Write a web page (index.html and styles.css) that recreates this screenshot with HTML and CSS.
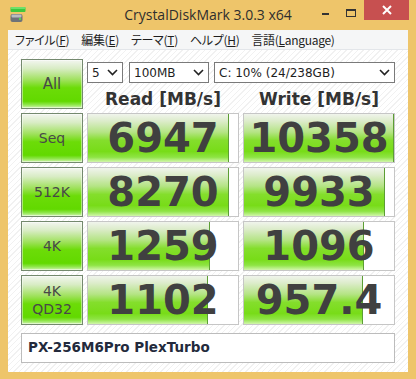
FILE: index.html
```html
<!DOCTYPE html>
<html lang="ja">
<head>
    <meta charset="UTF-8">
    <title>CrystalDiskMark 3.0.3 x64</title>
    <link rel="stylesheet" href="styles.css">
</head>
<body>
    <div class="window">
        <div class="titlebar">
            <div class="title-left">
                <svg class="app-icon" width="16" height="16" viewBox="0 0 16 16">
                    <rect x="0.5" y="0" width="15" height="5" rx="1" fill="#3cc83c"/>
                    <rect x="0.5" y="0" width="15" height="2" rx="1" fill="#6fe06a"/>
                    <rect x="0.5" y="7" width="12" height="8" rx="2" fill="#6e7378"/>
                    <rect x="1.5" y="7.5" width="10" height="3" rx="1" fill="#b8bcc0"/>
                    <rect x="9" y="11" width="2" height="2" fill="#4cd84c"/>
                </svg>
            </div>
            <div class="title">CrystalDiskMark 3.0.3 x64</div>
            <div class="caption">
                <div class="cap-btn cap-min"><span></span></div>
                <div class="cap-btn cap-max"><span></span></div>
                <div class="cap-btn cap-close">
                    <svg width="10" height="10" viewBox="0 0 10 10">
                        <path d="M1 1 L9 9 M9 1 L1 9" stroke="#fff" stroke-width="2"/>
                    </svg>
                </div>
            </div>
        </div>

        <ul class="menubar">
            <li>ファイル(<u>F</u>)</li>
            <li>編集(<u>E</u>)</li>
            <li>テーマ(<u>T</u>)</li>
            <li>ヘルプ(<u>H</u>)</li>
            <li>言語(<u>L</u>anguage)</li>
        </ul>

        <div class="client">
            <div class="bench">
                <div class="test-btn test-all">All</div>
                <div class="top-controls">
                    <div class="selects">
                        <div class="select sel-count">5<svg viewBox="0 0 11 7"><path d="M1 1 L5.5 5.5 L10 1" /></svg></div>
                        <div class="select sel-size">100MB<svg viewBox="0 0 11 7"><path d="M1 1 L5.5 5.5 L10 1" /></svg></div>
                        <div class="select sel-drive">C: 10% (24/238GB)<svg viewBox="0 0 11 7"><path d="M1 1 L5.5 5.5 L10 1" /></svg></div>
                    </div>
                    <div class="headers">
                        <div>Read [MB/s]</div>
                        <div>Write [MB/s]</div>
                    </div>
                </div>

                <div class="test-btn">Seq</div>
                <div class="result"><div class="fill" style="width: 94%"></div><div class="value">6947</div></div>
                <div class="result"><div class="fill" style="width: 100%"></div><div class="value">10358</div></div>

                <div class="test-btn">512K</div>
                <div class="result"><div class="fill" style="width: 94%"></div><div class="value">8270</div></div>
                <div class="result"><div class="fill" style="width: 94%"></div><div class="value">9933</div></div>

                <div class="test-btn">4K</div>
                <div class="result"><div class="fill" style="width: 81%"></div><div class="value">1259</div></div>
                <div class="result"><div class="fill" style="width: 80%"></div><div class="value">1096</div></div>

                <div class="test-btn two-line">4K<br>QD32</div>
                <div class="result"><div class="fill" style="width: 80%"></div><div class="value">1102</div></div>
                <div class="result"><div class="fill" style="width: 79%"></div><div class="value">957.4</div></div>
            </div>

            <div class="comment">PX-256M6Pro PlexTurbo</div>
        </div>
    </div>
</body>
</html>
```

FILE: styles.css
```css
body {
    margin: 0;
    padding: 0;
    background-color: #eec56a;
    font-family: 'DejaVu Sans', sans-serif;
}

.window {
    width: 416px;
    height: 379px;
    background-color: #eec56a;
    overflow: hidden;
}

/* barra de título */
.titlebar {
    display: grid;
    grid-template-columns: 1fr auto 1fr;
    height: 30px;
}

.title-left {
    padding: 7px 0 0 10px;
}

.app-icon {
    display: block;
}

.title {
    font-family: 'Open Sans', sans-serif;
    font-size: 14px;
    color: #2e2e2e;
    line-height: 30px;
    padding-bottom: 3px;
}

.caption {
    display: flex;
    justify-content: flex-end;
    align-items: flex-start;
    padding-right: 7px;
}

.cap-btn {
    height: 20px;
    display: flex;
    justify-content: center;
    align-items: flex-start;
}

.cap-min {
    width: 26px;
    padding-top: 13px;
    box-sizing: border-box;
}

.cap-min span {
    width: 7px;
    height: 2px;
    background-color: #333;
}

.cap-max {
    width: 26px;
    padding-top: 9px;
    box-sizing: border-box;
}

.cap-max span {
    width: 8px;
    height: 5px;
    border: 1px solid #333;
    border-top-width: 2px;
}

.cap-close {
    width: 45px;
    background-color: #c75050;
    align-items: center;
}

.cap-close svg {
    display: block;
}

/* menu */
.menubar {
    display: flex;
    gap: 12px;
    list-style-type: none;
    margin: 0 8px;
    padding: 0 0 0 7px;
    height: 19px;
    background-color: #f5f6f7;
    border-bottom: 1px solid #e3e6ea;
    font-family: 'Noto Sans CJK JP', sans-serif;
    font-feature-settings: "palt";
    font-size: 12px;
    letter-spacing: -0.3px;
    line-height: 19px;
    color: #1e1e1e;
}

/* área principal */
.client {
    margin: 0 8px;
    height: 322px;
    box-sizing: border-box;
    padding: 9px 0 0 13px;
    background-color: #fff;
    background-image: repeating-linear-gradient(135deg, #ffffff 0 3px, #f1f1f1 3px 4px);
}

.bench {
    display: grid;
    grid-template-columns: 62px 152px 152px;
    grid-auto-rows: 50px;
    column-gap: 4px;
    row-gap: 4px;
}

.test-btn {
    display: flex;
    align-items: center;
    justify-content: center;
    text-align: center;
    box-sizing: border-box;
    border: 1px solid #74896e;
    box-shadow: inset 0 0 0 1px rgba(255, 255, 255, 0.45);
    background: linear-gradient(to bottom, #f3f6f0 0%, #d8ecc4 18%, #9ee15a 42%, #6cdc08 58%, #62d900 86%, #8ee64a 93%, #d0f4b0 100%);
    font-size: 14px;
    color: #484848;
}

.test-all {
    font-size: 15px;
}

.two-line {
    line-height: 18px;
}

.top-controls {
    grid-column: 2 / 4;
}

.selects {
    display: flex;
    margin-top: 3px;
}

.select {
    display: flex;
    justify-content: space-between;
    align-items: center;
    box-sizing: border-box;
    height: 21px;
    padding: 0 4px 0 4px;
    background-color: #fff;
    border: 1px solid #7a7a7a;
    font-size: 12px;
    color: #1e1e1e;
}

.select svg {
    width: 11px;
    height: 7px;
    fill: none;
    stroke: #222;
    stroke-width: 1.6;
}

.sel-count {
    width: 36px;
}

.sel-size {
    width: 80px;
    margin-left: 6px;
}

.sel-drive {
    width: 181px;
    margin-left: 5px;
}

.headers {
    display: grid;
    grid-template-columns: 152px 152px;
    column-gap: 4px;
    margin-top: 6px;
    font-weight: bold;
    font-size: 17px;
    line-height: 20px;
    color: #333;
    text-align: center;
}

/* caixas de resultado */
.result {
    display: grid;
    box-sizing: border-box;
    border: 1px solid #c6c6c6;
    background-color: #fff;
}

.fill {
    grid-area: 1 / 1;
    box-sizing: border-box;
    border-right: 1px solid #5c9e34;
    background: linear-gradient(to bottom, #f0f4ec 0%, #dcecca 15%, #b4e484 38%, #84de2c 55%, #78dc18 78%, #8ee444 90%, #d2f6ac 100%);
}

.value {
    grid-area: 1 / 1;
    display: flex;
    align-items: center;
    justify-content: center;
    font-weight: bold;
    font-size: 40px;
    color: #404040;
    padding-bottom: 1px;
}

.comment {
    box-sizing: border-box;
    width: 374px;
    height: 30px;
    margin-top: 8px;
    padding-left: 6px;
    background-color: #fff;
    border: 1px solid #bcbcbc;
    font-weight: bold;
    font-size: 13.5px;
    line-height: 27px;
    color: #232a3c;
}
```
